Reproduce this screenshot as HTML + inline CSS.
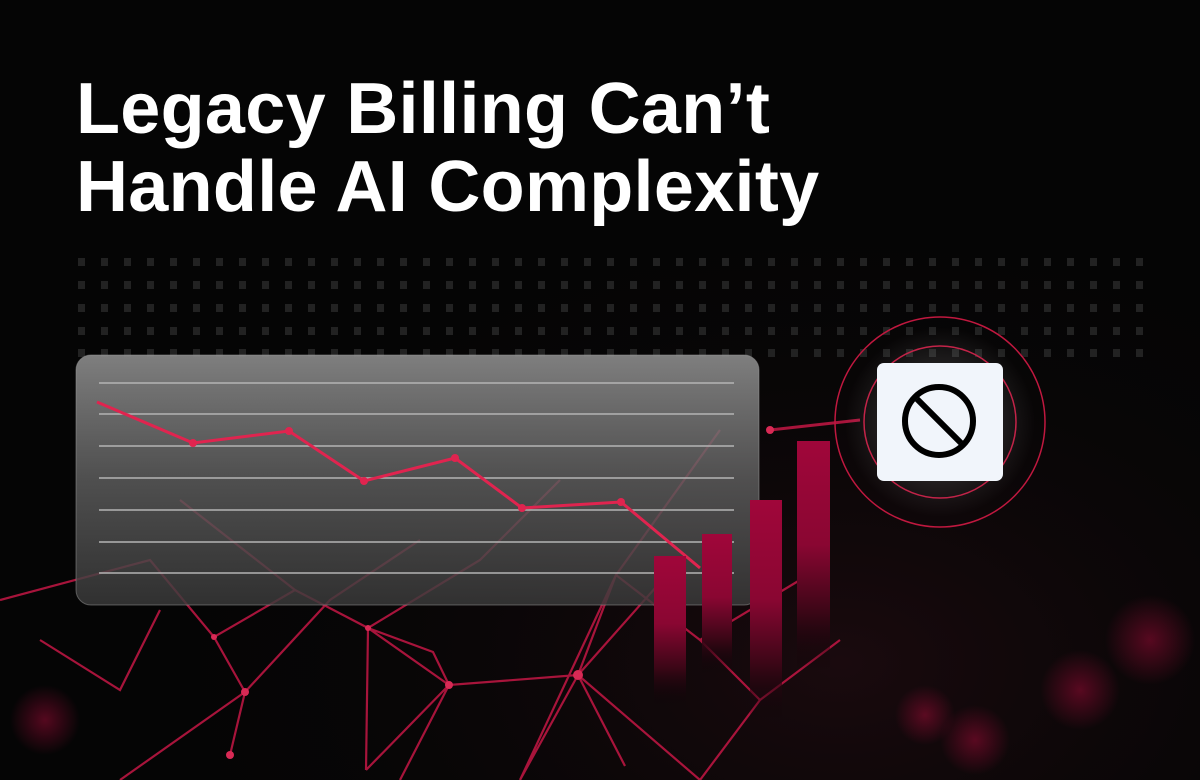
<!DOCTYPE html>
<html><head><meta charset="utf-8"><style>
html,body{margin:0;padding:0}
body{width:1200px;height:780px;overflow:hidden;background:#050505;position:relative;font-family:"Liberation Sans",sans-serif}
h1{position:absolute;left:76px;top:70px;margin:0;color:#fff;font-weight:bold;font-size:72px;line-height:78px;letter-spacing:0.3px}
svg{position:absolute;left:0;top:0}
</style></head><body>
<svg width="1200" height="780" viewBox="0 0 1200 780">
<defs>
<radialGradient id="bg" cx="0.7" cy="0.85" r="0.6"><stop offset="0" stop-color="#1a0a0e"/><stop offset="1" stop-color="#050505" stop-opacity="0"/></radialGradient>
<linearGradient id="panel" x1="0" y1="0" x2="0" y2="1"><stop offset="0" stop-color="#8c8c8c" stop-opacity="0.9"/><stop offset="0.5" stop-color="#5f5f5f" stop-opacity="0.82"/><stop offset="1" stop-color="#3a3a3a" stop-opacity="0.82"/></linearGradient>
<linearGradient id="bar" x1="0" y1="0" x2="0" y2="1"><stop offset="0" stop-color="#a0063a"/><stop offset="0.45" stop-color="#8a0632"/><stop offset="0.75" stop-color="#3a0616"/><stop offset="1" stop-color="#0a0306" stop-opacity="0"/></linearGradient>
<radialGradient id="blob"><stop offset="0" stop-color="#8a0a30" stop-opacity="0.6"/><stop offset="1" stop-color="#8a0a30" stop-opacity="0"/></radialGradient>
<radialGradient id="glow"><stop offset="0" stop-color="#fff" stop-opacity="0.25"/><stop offset="1" stop-color="#fff" stop-opacity="0"/></radialGradient>
</defs>
<rect width="1200" height="780" fill="url(#bg)"/>
<circle cx="1150" cy="640" r="45" fill="url(#blob)"/>
<circle cx="1080" cy="690" r="40" fill="url(#blob)"/>
<circle cx="975" cy="740" r="35" fill="url(#blob)"/>
<circle cx="925" cy="715" r="30" fill="url(#blob)"/>
<circle cx="45" cy="720" r="35" fill="url(#blob)"/>
<g fill="#222" id="dots">
</g>
<g stroke="#d01848" stroke-opacity="0.8" fill="none" stroke-width="2.2">
<path d="M578,675 L449,685 L368,628 L295,590 L214,637 L245,692 L230,755 M578,675 L616,575 L700,640 L760,700 M578,675 L625,766 M578,675 L520,780 M449,685 L433,652 L368,628 M449,685 L366,770 M449,685 L400,780 M368,628 L366,770 M214,637 L150,560 L0,600 M245,692 L330,600 L420,540 M578,675 L680,560 M578,675 L700,780 M616,575 L720,430 M700,640 L800,580 M760,700 L840,640 M520,780 L616,575 M295,590 L180,500 M368,628 L480,560 L560,480 M245,692 L120,780 M760,700 L700,780 M160,610 L120,690 L40,640"/>
<path d="M770,430 L860,420" stroke-width="3"/>
</g>
<g fill="#d82a55"><circle cx="578" cy="675" r="5"/><circle cx="449" cy="685" r="4"/><circle cx="245" cy="692" r="4"/><circle cx="230" cy="755" r="4"/><circle cx="368" cy="628" r="3"/><circle cx="214" cy="637" r="3"/><circle cx="770" cy="430" r="4"/></g>
<rect x="76" y="355" width="683" height="250" rx="15" fill="url(#panel)" stroke="#9a9a9a" stroke-opacity="0.5"/>
<g stroke="#b4b4b4" stroke-width="1.5">
<line x1="99" y1="383" x2="734" y2="383"/><line x1="99" y1="414" x2="734" y2="414"/><line x1="99" y1="446" x2="734" y2="446"/><line x1="99" y1="478" x2="734" y2="478"/><line x1="99" y1="510" x2="734" y2="510"/><line x1="99" y1="542" x2="734" y2="542"/><line x1="99" y1="573" x2="734" y2="573"/>
</g>
<polyline points="97,402 193,443 289,431 364,481 455,458 522,508 621,502 700,568" fill="none" stroke="#e0244f" stroke-width="3"/>
<g fill="#e0244f"><circle cx="193" cy="443" r="4"/><circle cx="289" cy="431" r="4"/><circle cx="364" cy="481" r="4"/><circle cx="455" cy="458" r="4"/><circle cx="522" cy="508" r="4"/><circle cx="621" cy="502" r="4"/></g>
<rect x="654" y="556" width="32" height="150" fill="url(#bar)"/>
<rect x="702" y="534" width="30" height="140" fill="url(#bar)"/>
<rect x="750" y="500" width="32" height="220" fill="url(#bar)"/>
<rect x="797" y="441" width="33" height="230" fill="url(#bar)"/>
<circle cx="940" cy="422" r="105" fill="none" stroke="#c0183f" stroke-width="1.5"/>
<circle cx="940" cy="422" r="76" fill="none" stroke="#c0183f" stroke-width="1.5"/>
<circle cx="940" cy="422" r="95" fill="url(#glow)"/>
<rect x="877" y="363" width="126" height="118" rx="7" fill="#f1f5fb"/>
<circle cx="939" cy="421" r="34" fill="none" stroke="#000" stroke-width="6"/>
<line x1="917" y1="399" x2="961" y2="443" stroke="#000" stroke-width="6"/>
</svg>
<h1>Legacy Billing Can’t<br>Handle AI Complexity</h1>
<script>
var g=document.getElementById('dots'),s='';
[262,285,308,331,353].forEach(function(y){for(var x=78;x<1150;x+=23){s+='<rect x="'+x+'" y="'+(y-4)+'" width="7" height="8"/>';}});
g.innerHTML=s;
</script>
</body></html>
